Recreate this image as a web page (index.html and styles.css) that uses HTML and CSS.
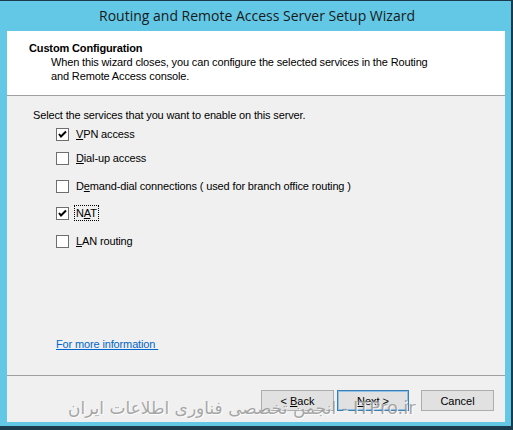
FILE: index.html
```html
<!DOCTYPE html>
<html lang="en">
<head>
    <meta charset="UTF-8">
    <meta name="viewport" content="width=device-width, initial-scale=1.0">
    <title>Routing and Remote Access Server Setup Wizard</title>
    <link rel="stylesheet" href="styles.css">
</head>
<body>
    <div id="wizard">
        <div class="title-bar">Routing and Remote Access Server Setup Wizard</div>
        <div class="client">
            <header class="page-header">
                <h1>Custom Configuration</h1>
                <p>When this wizard closes, you can configure the selected services in the Routing<br>and Remote Access console.</p>
            </header>
            <main class="page-body">
                <p class="prompt">Select the services that you want to enable on this server.</p>
                <ul class="options">
                    <li class="opt opt-vpn"><span class="box checked"></span><span class="label"><u>V</u>PN access</span></li>
                    <li class="opt opt-dial"><span class="box"></span><span class="label"><u>D</u>ial-up access</span></li>
                    <li class="opt opt-demand"><span class="box"></span><span class="label">D<u>e</u>mand-dial connections ( used for branch office routing )</span></li>
                    <li class="opt opt-nat"><span class="box checked"></span><span class="label focus">N<u>A</u>T</span></li>
                    <li class="opt opt-lan"><span class="box"></span><span class="label"><u>L</u>AN routing</span></li>
                </ul>
                <a class="more-info" href="#">For more information </a>
            </main>
            <footer class="page-footer">
                <button class="btn">&lt; <u>B</u>ack</button>
                <button class="btn default"><u>N</u>ext &gt;</button>
                <button class="btn cancel">Cancel</button>
            </footer>
        </div>
        <div class="watermark" dir="ltr"><bdi dir="rtl">انجمن تخصصی فناوری اطلاعات ایران</bdi> - <bdi dir="ltr" class="site">ITPro.ir</bdi></div>
    </div>
</body>
</html>
```

FILE: styles.css
```css
:root {
    --frame-color: #62c8e6;
    --frame-edge: #1b3a4b;
    --face-color: #f0f0f0;
    --line-color: #a0a0a0;
    --text-color: #000000;
}

* {
    margin: 0;
    padding: 0;
    box-sizing: border-box;
}

body {
    font-family: 'Liberation Sans', Arial, sans-serif;
    font-size: 11px;
    letter-spacing: -0.14px;
    color: var(--text-color);
    background-color: var(--frame-color);
}

#wizard {
    position: relative;
    width: 513px;
    height: 430px;
    background-color: var(--frame-color);
    border-top: 1px solid var(--frame-edge);
    border-right: 2px solid var(--frame-edge);
    border-bottom: 4px solid var(--frame-edge);
    padding: 0 6px 4px 7px;
    display: flex;
    flex-direction: column;
}

.title-bar {
    height: 30px;
    line-height: 30px;
    text-align: center;
    font-family: 'Open Sans', 'Noto Sans', sans-serif;
    font-size: 14px;
    letter-spacing: 0;
    color: #1a1a1a;
    padding-left: 2px;
}

.client {
    flex: 1;
    display: flex;
    flex-direction: column;
    background-color: var(--face-color);
}

.page-header {
    height: 65px;
    background-color: #ffffff;
    border-bottom: 1px solid var(--line-color);
    padding: 10px 0 0 22px;
    line-height: 14px;
}

.page-header h1 {
    font-size: 11px;
    font-weight: bold;
}

.page-header p {
    padding-left: 22px;
}

.page-body {
    height: 280px;
    border-bottom: 1px solid var(--line-color);
    padding: 12px 0 0 26px;
    line-height: 14px;
}

.options {
    list-style: none;
    margin: 5px 0 0 23px;
}

.opt {
    display: flex;
    align-items: center;
    height: 14px;
}

.opt-dial { margin-top: 10px; }
.opt-demand { margin-top: 14px; }
.opt-nat { margin-top: 13px; }
.opt-lan { margin-top: 14px; }

.box {
    width: 13px;
    height: 13px;
    border: 1px solid #6e6e6e;
    background-color: #ffffff;
    margin-right: 5px;
    flex-shrink: 0;
}

.box.checked {
    background: #ffffff url("data:image/svg+xml,%3Csvg xmlns='http://www.w3.org/2000/svg' width='11' height='11'%3E%3Cpath d='M2 5 L4 7.5 L9 2.5' fill='none' stroke='%23000' stroke-width='2'/%3E%3C/svg%3E") center no-repeat;
}

.label {
    padding: 0 1px;
    border: 1px solid transparent;
}

.label.focus {
    border: 1px dotted #000000;
}

.more-info {
    display: inline-block;
    margin: 89px 0 0 23px;
    color: #0066cc;
    white-space: pre;
}

.page-footer {
    flex: 1;
    display: flex;
    justify-content: flex-end;
    align-items: flex-start;
    padding: 14px 11px 0 0;
}

.btn {
    width: 73px;
    height: 21px;
    font-family: 'Liberation Sans', Arial, sans-serif;
    font-size: 11px;
    background-color: #e1e1e1;
    border: 1px solid #adadad;
    color: #000000;
}

.btn + .btn {
    margin-left: 3px;
}

.btn.default {
    width: 72px;
    border-color: #3c7fb1;
    box-shadow: inset 0 0 0 1px #8fc1ea;
}

.btn.cancel {
    margin-left: 12px;
}

.watermark {
    position: absolute;
    left: 68px;
    top: 396px;
    font-family: 'DejaVu Sans', sans-serif;
    font-size: 17px;
    letter-spacing: 0;
    color: rgba(140, 140, 140, 0.75);
    text-shadow: 1px 1px 0 rgba(255, 255, 255, 0.8);
    white-space: nowrap;
    pointer-events: none;
}

.watermark .site {
    font-size: 18px;
}
```
